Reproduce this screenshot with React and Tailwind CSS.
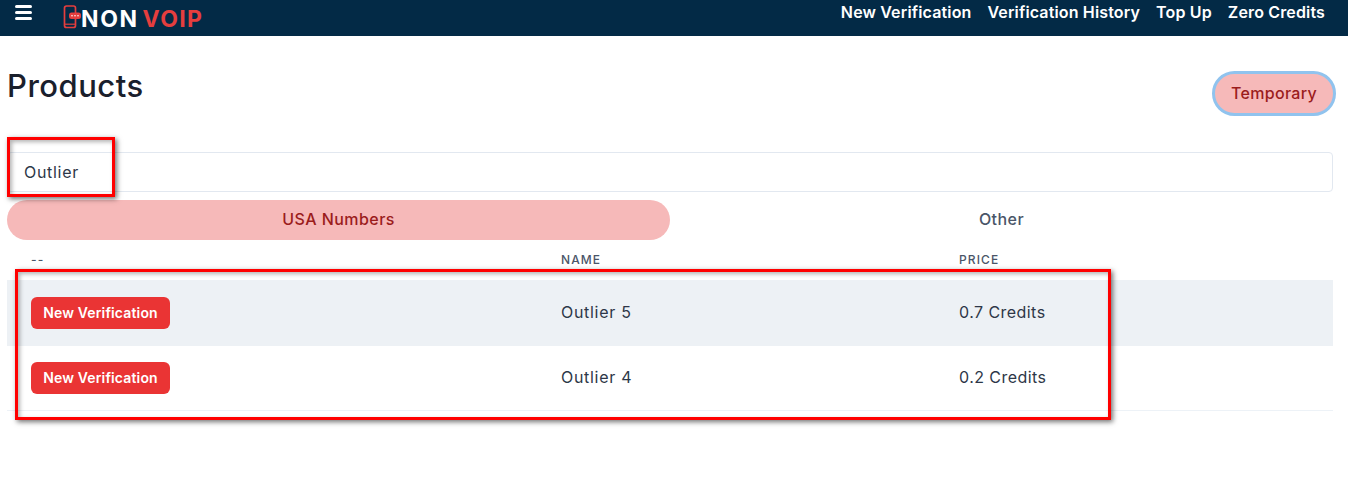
const rows = [
  { name: "Outlier 5", price: "0.7 Credits", rowClass: "h-[66px] bg-[#edf1f5]" },
  { name: "Outlier 4", price: "0.2 Credits", rowClass: "h-[64px] bg-white" },
];

function Logo() {
  return (
    <div className="flex items-center ml-[31px] h-full">
      <svg width="20" height="24" viewBox="0 0 20 24" fill="none" className="-mt-[2px]">
        <path d="M12.5 8V3A2 2 0 0 0 10.5 1H3.5A2 2 0 0 0 1.5 3V20.5A2 2 0 0 0 3.5 22.5H10.5A2 2 0 0 0 12.5 20.5V14" stroke="#e53e3e" strokeWidth="1.7" />
        <rect x="2" y="18.6" width="10" height="1.2" fill="#e53e3e" />
        <rect x="6" y="7.5" width="12" height="6.5" rx="2.5" fill="#e53e3e" />
        <circle cx="9" cy="10.7" r="0.8" fill="#fff" />
        <circle cx="12" cy="10.7" r="0.8" fill="#fff" />
        <circle cx="15" cy="10.7" r="0.8" fill="#fff" />
      </svg>
      <span className="font-bold text-[23px] leading-none text-white -ml-[2px] mt-[2px] tracking-[1.6px]">NON</span>
      <span className="font-bold text-[23px] leading-none text-[#e53e3e] ml-[4px] mt-[2px] tracking-[1.3px]">VOIP</span>
    </div>
  );
}

function Navbar() {
  return (
    <nav className="h-9 bg-[#032a46] flex items-center justify-between pr-[23px]">
      <div className="flex items-center h-full">
        <div className="ml-[15px] flex flex-col gap-[3px] w-[17px] -mt-[11px]">
          <span className="h-[3px] bg-white rounded-sm" />
          <span className="h-[3px] bg-white rounded-sm" />
          <span className="h-[3px] bg-white rounded-sm" />
        </div>
        <Logo />
      </div>
      <div className="flex gap-4 text-white text-[16px] font-semibold tracking-[0.15px] -mt-[12px]">
        <a>New Verification</a>
        <a>Verification History</a>
        <a>Top Up</a>
        <a>Zero Credits</a>
      </div>
    </nav>
  );
}

export default function App() {
  return (
    <div className="relative min-h-[486px] bg-white font-['Inter',sans-serif]">
      <Navbar />

      <main className="px-[7px] pr-[15px]">
        <div className="flex items-start justify-between pt-[35px]">
          <h1 className="text-[31px] leading-[30px] font-medium text-[#1a202c] tracking-[0.5px]">Products</h1>
          <button className="w-[124px] h-[45px] -mr-[3px] pb-[2px] rounded-full bg-[#f6b9b9] border-[3px] border-[#90c3ee] text-[#9b1c1c] text-[16px] font-medium tracking-[0.3px]">
            Temporary
          </button>
        </div>

        <div className="mt-[36px] h-10 border border-[#e2e8f0] rounded flex items-center pl-[16px] text-[16px] text-[#2d3748] tracking-[0.7px]">
          Outlier
        </div>

        <div className="mt-2 grid grid-cols-2 h-10 text-[16px] font-medium tracking-[0.45px]">
          <div className="rounded-full bg-[#f6b9b9] text-[#9b1c1c] flex items-center justify-center pb-[2px]">USA Numbers</div>
          <div className="text-[#4a5568] flex items-center justify-center pb-[2px]">Other</div>
        </div>

        <div className="grid grid-cols-[530px_398px_1fr] items-center pl-6 h-10 text-[12px] font-medium text-[#4a5568] tracking-[1.1px]">
          <span>--</span>
          <span>NAME</span>
          <span>PRICE</span>
        </div>

        <div className="border-b border-[#edf2f7]">
          {rows.map((row) => (
            <div
              key={row.name}
              className={`grid grid-cols-[530px_398px_1fr] items-center pl-6 text-[16px] text-[#2d3748] ${row.rowClass}`}
            >
              <div>
                <button className="w-[139px] h-8 pb-[2px] rounded-md bg-[#ea3434] text-white text-[14px] font-semibold tracking-[0.15px]">
                  New Verification
                </button>
              </div>
              <span className="pb-[2px] tracking-[0.7px]">{row.name}</span>
              <span className="pb-[2px] tracking-[0.45px]">{row.price}</span>
            </div>
          ))}
        </div>
      </main>

      {/* annotation boxes drawn over the screenshot */}
      <div className="absolute left-[7px] top-[137px] w-[108px] h-[60px] border-[3px] border-[#ff0000] shadow-[2px_2px_5px_rgba(0,0,0,0.55),inset_2px_2px_4px_rgba(0,0,0,0.3)]" />
      <div className="absolute left-[15px] top-[269px] w-[1096px] h-[151px] border-[3px] border-[#ff0000] shadow-[2px_2px_5px_rgba(0,0,0,0.55),inset_2px_2px_4px_rgba(0,0,0,0.3)]" />
    </div>
  );
}
